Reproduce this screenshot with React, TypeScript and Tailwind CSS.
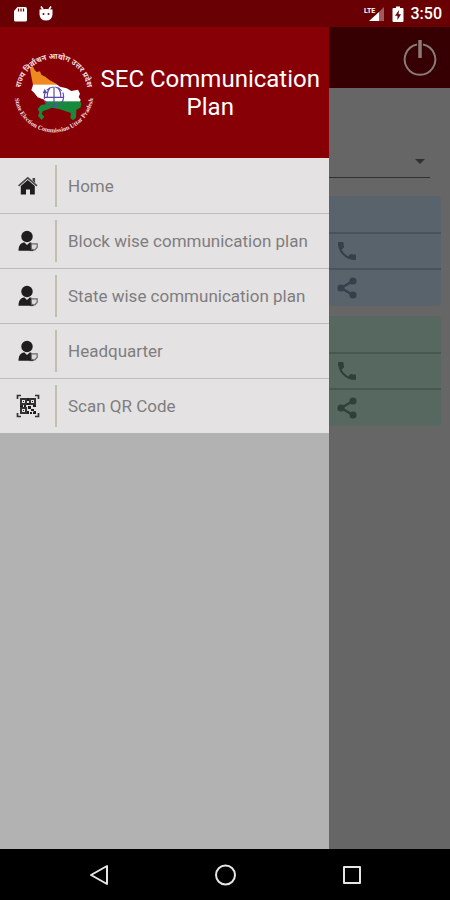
import React from "react";

type IconProps = { className?: string };

function HomeIcon({ className }: IconProps) {
  return (
    <svg viewBox="0 0 22 22" className={className} aria-hidden="true">
      <path d="M15.5 3h2.6v5l-2.6-2.4z" fill="#4a4848" />
      <path d="M1.600 10.800 10.800 2.800l9.200 8" fill="none" stroke="#4a4848" strokeWidth="1.600" />
      <path d="M3.800 11 10.800 5l7 6v8.600h-4.800v-5H9v5H3.800z" fill="#1f1d1e" />
    </svg>
  );
}

function PersonIcon({ className }: IconProps) {
  return (
    <svg viewBox="0 0 22 22" className={className} aria-hidden="true">
      <circle cx="10" cy="6.500" r="5.700" fill="#1f1d1e" />
      <path d="M1.500 20.700c.2-5 1.800-7.400 5.700-8.400l2.800 2.600 3-2.600 1.800.8-.6 3 .6 4.600z" fill="#1f1d1e" />
      <path d="M14.300 13.800h5.900v3.400l-2.300 2.600h-2.400l-1.200-1.400z" fill="#dcdadb" stroke="#6a6869" strokeWidth="1.200" />
      <path d="M12.500 20.500h4" fill="none" stroke="#3c3a3a" strokeWidth="1.200" />
    </svg>
  );
}

function QrIcon({ className }: IconProps) {
  return (
    <svg viewBox="0 0 24 24" className={className} aria-hidden="true" fill="none" stroke="#343233">
      <path d="M1.500 5V1.500H5M19 1.500h3.500V5M22.500 19v3.500H19M5 22.500H1.500V19" strokeWidth="1.700" />
      <path d="M5 5h5v5H5zM14 5h5v5h-5zM5 14h5v5H5z" strokeWidth="2" />
      <path
        d="M11 4h2v3h-2zM11 9h3v2h-3zM4 11h3v2H4zM8 11h2v2H8zM12 12h3v3h-3zM17 11h3v2h-3zM15 15h3v2h-3zM11 17h2v3h-2zM18 17h2v3h-3v-2zM14 18h2v2h-2zM7 7h1v1H7zM16 7h1v1h-1zM7 16h1v1H7z"
        fill="#1f1d1e"
        stroke="none"
      />
    </svg>
  );
}

function PhoneIcon({ className }: IconProps) {
  return (
    <svg viewBox="0 0 24 24" className={className} aria-hidden="true" fill="currentColor">
      <path d="M6.62 10.79c1.44 2.83 3.76 5.14 6.59 6.59l2.2-2.2c.27-.27.67-.36 1.02-.24 1.12.37 2.33.57 3.57.57.55 0 1 .45 1 1V20c0 .55-.45 1-1 1-9.39 0-17-7.61-17-17 0-.55.45-1 1-1h3.500c.55 0 1 .45 1 1 0 1.250.2 2.450.57 3.570.11.350.03.740-.250 1.020z" />
    </svg>
  );
}

function ShareIcon({ className }: IconProps) {
  return (
    <svg viewBox="0 0 24 24" className={className} aria-hidden="true" fill="currentColor" stroke="currentColor">
      <path d="M18 5 6 12l12 7" fill="none" strokeWidth="2.400" />
      <circle cx="18" cy="5" r="3.600" stroke="none" />
      <circle cx="6" cy="12" r="3.600" stroke="none" />
      <circle cx="18" cy="19" r="3.600" stroke="none" />
    </svg>
  );
}

function Logo() {
  return (
    <svg viewBox="30 145 264 264" className="size-[88px] shrink-0" role="img" aria-label="State Election Commission">
      <defs>
        <path id="arc-top" d="M61 280V276A101 101 0 0 1 263 276V280" />
        <path id="arc-bottom" d="M43 276A119 119 0 0 0 281 276" />
        <clipPath id="state">
          <path d="M90 200l8-4 6 12 6 6 10-2 4 10 12 6 12 10 18 10 14 10 20 5 14 8 20-4 6 12-4 10 6 8-2 6 5 6-4 12-12 6-1 24-9 8-8-6 2-16-18-6-18-6-22-4-14 6-12 4-4 8 8 9-8 10-11-12 4-11-5-10 10-12 14-2-4-14-20-7-12-15-7-6 5-16-4-20-3-16z" />
        </clipPath>
      </defs>
      <g clipPath="url(#state)">
        <rect x="80" y="190" width="180" height="64" fill="#ee8a20" />
        <rect x="80" y="252" width="180" height="52" fill="#ffffff" />
        <rect x="80" y="302" width="180" height="60" fill="#16893d" />
      </g>
      <g fill="none" stroke="#5b4aa8" strokeWidth="3.500">
        <circle cx="162" cy="288" r="29" strokeDasharray="22 6" />
        <path d="M162 258v58M132 290h58M150 262c-7 8-9 18-8 28M174 262c7 8 9 18 8 28" />
        <path d="M134 264l-6 14 14-1z" fill="#5b4aa8" stroke="none" />
      </g>
      <g fill="#f3dede">
        <text fontSize="23" fontWeight="700" fontFamily="'Noto Sans Devanagari', 'Noto Sans', sans-serif">
          <textPath href="#arc-top" startOffset="50%" textAnchor="middle">राज्य निर्वाचन आयोग उत्तर प्रदेश</textPath>
        </text>
        <text fontSize="19" fontWeight="700" fontFamily="'Liberation Serif', serif">
          <textPath href="#arc-bottom" startOffset="50%" textAnchor="middle">State Election Commission Uttar Pradesh</textPath>
        </text>
      </g>
    </svg>
  );
}

function StatusBar() {
  return (
    <div className="flex h-[27px] shrink-0 items-center justify-between bg-[#690003] pr-2 pl-3 text-white">
      <div className="flex items-center gap-[10px]">
        <svg viewBox="0 0 16 16" className="size-4" aria-hidden="true">
          <path d="M5.500 1H13a2 2 0 0 1 2 2v11a1.500 1.500 0 0 1-1.500 1.500h-10A1.500 1.500 0 0 1 2 14V5z" fill="#fff" />
          <path d="M6.500 2.500v3M9 2.500v3M11.500 2.500v3" stroke="#690003" strokeWidth="1.200" />
        </svg>
        <svg viewBox="0 0 16 18" className="h-[18px] w-4" aria-hidden="true">
          <path d="M3 1.500 5 4.500M13 1.500 11 4.500" stroke="#fff" strokeWidth="1.600" />
          <path d="M1.500 4.500q6.500-1 13 0v5q-.5 6-6.500 6t-6.500-6z" fill="#fff" />
          <circle cx="5.500" cy="9" r="1" fill="#690003" />
          <circle cx="10.500" cy="9" r="1" fill="#690003" />
        </svg>
      </div>
      <div className="flex items-center gap-[7px]">
        <svg viewBox="0 0 22 18" className="h-[18px] w-[22px]" aria-hidden="true">
          <path d="M21 2v14h-5V7z" fill="#a35a5c" />
          <path d="M16 7v9H6z" fill="#fff" />
          <text x="1" y="8" fontSize="7" fontWeight="700" fill="#fff" fontFamily="Roboto, sans-serif">LTE</text>
        </svg>
        <svg viewBox="0 0 12 18" className="h-[18px] w-3" aria-hidden="true">
          <path d="M4 1.500h4V3h2.500q1 0 1 1v12q0 1-1 1h-9q-1 0-1-1V4q0-1 1-1H4z" fill="#fff" />
          <path d="M7 5 3 10.800h2.500V15L9 9.300H6.500z" fill="#690003" />
        </svg>
        <span className="text-base leading-5 font-medium">3:50</span>
      </div>
    </div>
  );
}

type ContactCardProps = { panel: string; line: string; icon: string };

function ContactCard({ panel, line, icon }: ContactCardProps) {
  return (
    <section className={`flex flex-col rounded ${panel}`}>
      <div className={`h-[38px] border-b-2 ${line}`} />
      <div className={`flex h-9 items-center justify-end border-b-2 ${line}`}>
        <button type="button" aria-label="Call" className={`mr-[82px] ${icon}`}>
          <PhoneIcon className="size-6" />
        </button>
      </div>
      <div className="flex h-9 items-center justify-end">
        <button type="button" aria-label="Share" className={`mr-[82px] ${icon}`}>
          <ShareIcon className="size-6" />
        </button>
      </div>
    </section>
  );
}

function PlanPage() {
  return (
    <div className="flex flex-1 flex-col bg-[#666666]">
      <header className="flex h-[61px] items-center justify-end bg-[#360002] pr-3">
        <button type="button" aria-label="Log out" className="text-[#8a7b78]">
          <svg viewBox="0 0 36 38" className="h-[38px] w-9" fill="none" stroke="currentColor" strokeWidth="2" aria-hidden="true">
            <path d="M15 5.500a15.300 15.300 0 1 0 6 0" />
            <path d="M18 1v18" strokeWidth="3.500" />
          </svg>
        </button>
      </header>
      <div className="flex flex-col gap-[10px] px-[9px] pt-[58px]">
        <div className="mr-[11px] mb-2 flex h-8 items-start justify-end border-b border-[#303030]">
          <select aria-label="Block" className="h-8 flex-1 appearance-none bg-transparent" />
          <svg viewBox="0 0 12 6" className="mt-[13px] mr-1 h-[6px] w-3 text-[#303030]" aria-hidden="true">
            <path d="M1 0h10L6 5z" fill="currentColor" />
          </svg>
        </div>
        <ContactCard panel="bg-[#59636b]" line="border-[#4a535c]" icon="text-[#36404a]" />
        <ContactCard panel="bg-[#56685f]" line="border-[#48574f]" icon="text-[#2f4038]" />
      </div>
    </div>
  );
}

const menu = [
  { label: "Home", Icon: HomeIcon, size: "size-[22px]" },
  { label: "Block wise communication plan", Icon: PersonIcon, size: "size-[22px]" },
  { label: "State wise communication plan", Icon: PersonIcon, size: "size-[22px]" },
  { label: "Headquarter", Icon: PersonIcon, size: "size-[22px]" },
  { label: "Scan QR Code", Icon: QrIcon, size: "size-6" },
];

function Drawer() {
  return (
    <aside className="absolute inset-y-0 left-0 flex w-[73%] flex-col bg-[#b2b2b2]">
      <div className="flex h-[131px] items-center bg-[#870006] pr-[6px] pl-[10px]">
        <Logo />
        <h1 className="flex-1 text-center text-2xl leading-7 text-white">SEC Communication Plan</h1>
      </div>
      <nav>
        <ul>
          {menu.map(({ label, Icon, size }) => (
            <li key={label} className="border-t border-[#bdbbbc] bg-[#e4e2e3] first:border-[#e4e2e3]">
              <a href="#" className="flex h-[54px] items-center">
                <span className="flex w-[55px] justify-center">
                  <Icon className={size} />
                </span>
                <span className="h-[42px] w-[2px] bg-[#c2bfaa]" />
                <span className="pl-[11px] text-[17px] leading-6 text-[#7f7d7e]">{label}</span>
              </a>
            </li>
          ))}
        </ul>
      </nav>
    </aside>
  );
}

function NavigationBar() {
  return (
    <div className="flex h-[51px] shrink-0 items-center justify-center gap-[102px] bg-black text-[#e6e6e6]">
      <button type="button" aria-label="Back">
        <svg viewBox="0 0 24 24" className="size-6" fill="none" stroke="currentColor" strokeWidth="2" strokeLinejoin="round" aria-hidden="true">
          <path d="M20 3v18L4 12z" />
        </svg>
      </button>
      <button type="button" aria-label="Home">
        <svg viewBox="0 0 24 24" className="size-6" fill="none" stroke="currentColor" strokeWidth="2" aria-hidden="true">
          <circle cx="12.500" cy="12" r="9.500" />
        </svg>
      </button>
      <button type="button" aria-label="Recent apps">
        <svg viewBox="0 0 24 24" className="size-6" fill="none" stroke="currentColor" strokeWidth="2" strokeLinejoin="round" aria-hidden="true">
          <path d="M5 4h16v16H5z" />
        </svg>
      </button>
    </div>
  );
}

export default function App() {
  return (
    <div className="flex min-h-screen flex-col font-[Roboto,sans-serif]">
      <StatusBar />
      <main className="relative flex flex-1 flex-col">
        <PlanPage />
        <Drawer />
      </main>
      <NavigationBar />
    </div>
  );
}
